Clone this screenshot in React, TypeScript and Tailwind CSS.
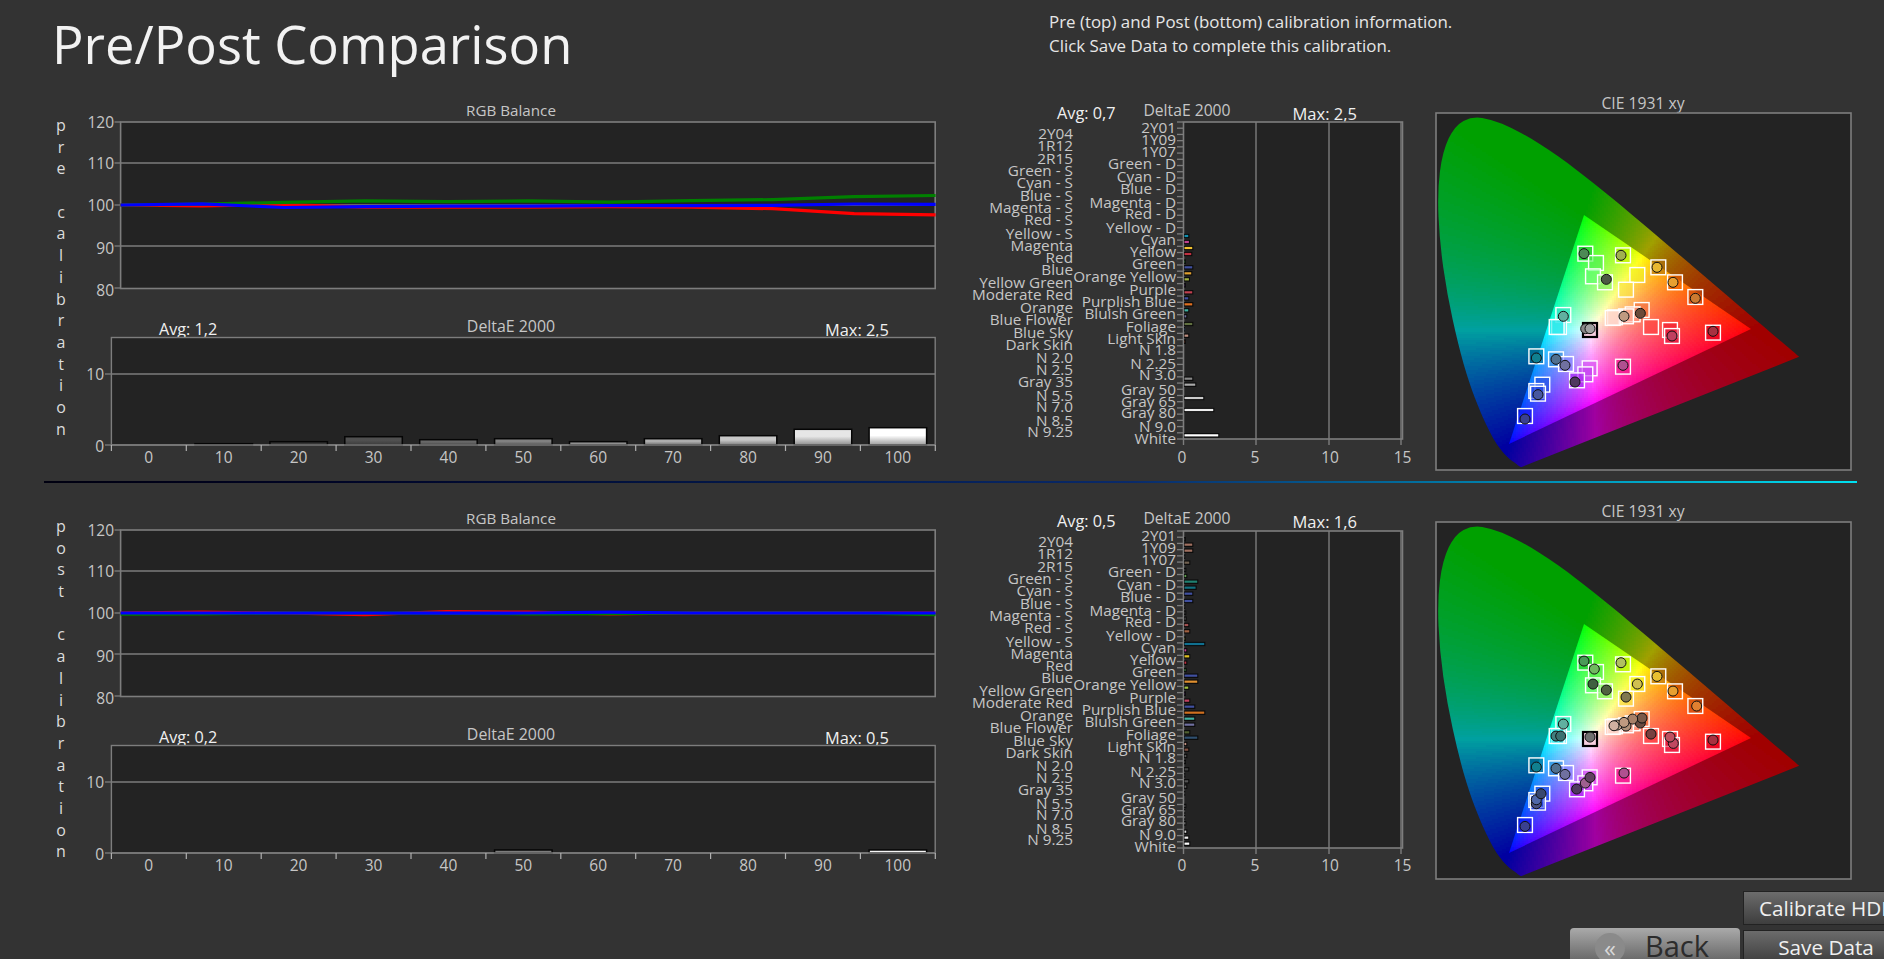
import React from "react";

const LABEL = "#c6c6c6";
const FRAME = "#7d7d7d";

type Side = "pre" | "post";

const XYZ_LOCUS: [number, number][] = [
  [0.1741, 0.005], [0.174, 0.005], [0.1738, 0.0049], [0.1736, 0.0049], [0.1733, 0.0048], [0.173, 0.0048],
  [0.1726, 0.0048], [0.1721, 0.0048], [0.1714, 0.0051], [0.1703, 0.0058], [0.1689, 0.0069], [0.1669, 0.0086],
  [0.1644, 0.0109], [0.1611, 0.0138], [0.1566, 0.0177], [0.151, 0.0227], [0.144, 0.0297], [0.1355, 0.0399],
  [0.1241, 0.0578], [0.1096, 0.0868], [0.0913, 0.1327], [0.0687, 0.2007], [0.0454, 0.295], [0.0235, 0.4127],
  [0.0082, 0.5384], [0.0039, 0.6548], [0.0139, 0.7502], [0.0389, 0.812], [0.0743, 0.8338], [0.1142, 0.8262],
  [0.1547, 0.8059], [0.1929, 0.7816], [0.2296, 0.7543], [0.2658, 0.7243], [0.3016, 0.6923], [0.3373, 0.6589],
  [0.3731, 0.6245], [0.4087, 0.5896], [0.4441, 0.5547], [0.4788, 0.5202], [0.5125, 0.4866], [0.5448, 0.4544],
  [0.5752, 0.4242], [0.6029, 0.3965], [0.627, 0.3725], [0.6482, 0.3514], [0.6658, 0.334], [0.6915, 0.3083],
  [0.7079, 0.292], [0.719, 0.2809], [0.726, 0.274], [0.7334, 0.2666], [0.7347, 0.2653],
];

const px = (x: number) => 1435.5 + 495 * x;
const py = (y: number) => 469 - 423 * y;
const invX = (p: number) => (p - 1435.5) / 495;
const invY = (p: number) => (469 - p) / 423;

const locusPath = (() => {
  const pts = XYZ_LOCUS.map(([x, y]) => [px(x), py(y)] as [number, number]);
  let d = `M${pts[0][0].toFixed(1)} ${pts[0][1].toFixed(1)}`;
  for (let i = 1; i < pts.length - 1; i++) {
    const mx = (pts[i][0] + pts[i + 1][0]) / 2;
    const my = (pts[i][1] + pts[i + 1][1]) / 2;
    d += `Q${pts[i][0].toFixed(1)} ${pts[i][1].toFixed(1)} ${mx.toFixed(1)} ${my.toFixed(1)}`;
  }
  const last = pts[pts.length - 1];
  return `${d}L${last[0].toFixed(1)} ${last[1].toFixed(1)}Z`;
})();
const trianglePoints = "1751,329 1584,215 1509,444";

function chroma(x: number, y: number, k: number, gamma: number): string {
  const X = x / y;
  const Z = (1 - x - y) / y;
  const r = Math.max(0, 3.2406 * X - 1.5372 - 0.4986 * Z);
  const g = Math.max(0, -0.9689 * X + 1.8758 + 0.0415 * Z);
  const b = Math.max(0, 0.0557 * X - 0.204 + 1.057 * Z);
  const m = Math.max(r, g, b, 1e-6);
  const ch = (v: number) => {
    const c = Math.pow(v / m, 1 / gamma) * 255 * k;
    return Math.min(255, Math.round(c / 5) * 5);
  };
  return `rgb(${ch(r)},${ch(g)},${ch(b)})`;
}

function buildCells(x0: number, x1: number, y0: number, y1: number, k: number, gamma: number) {
  const map = new Map<string, string[]>();
  for (let y = y0; y < y1; y += 2) {
    let start = x0;
    let last = "";
    for (let x = x0; x <= x1; x += 2) {
      const c = x < x1 ? chroma(invX(x + 1), Math.max(0.002, invY(y + 1)), k, gamma) : "";
      if (c !== last) {
        if (last) {
          const w = x - start;
          if (!map.has(last)) map.set(last, []);
          map.get(last)!.push(`M${start} ${y}h${w}v2.2h-${w}z`);
        }
        start = x;
        last = c;
      }
    }
  }
  return Array.from(map.entries()).map(([c, parts]) => ({ c, d: parts.join("") }));
}

const outerCells = buildCells(1436, 1802, 114, 472, 0.63, 1.1);
const innerCells = buildCells(1506, 1754, 212, 446, 1, 1.35);

const squares: [number, number, string][] = [
  [496, 491, "#22c030"], [528, 519, "#50f050"], [519, 559, "#60ff70"], [555, 577, "#80f060"],
  [609, 496, "#b8f000"], [652, 555, "#f0f020"], [618, 599, "#f8e040"], [715, 532, "#b07010"],
  [765, 577, "#f06000"], [826, 621, "#c85010"], [665, 660, "#f07040"], [638, 673, "#ff9a80"],
  [618, 679, "#ffb0a0"], [585, 682, "#ffe0d0"], [578, 684, "#ffd8d0"], [693, 711, "#ff4040"],
  [750, 720, "#f01830"], [756, 738, "#e01840"], [879, 728, "#e00020"], [430, 675, "#30e0c0"],
  [417, 711, "#30e8f0"], [410, 711, "#30e8e8"], [349, 799, "#006888"], [408, 808, "#3090d8"],
  [438, 822, "#8080ff"], [509, 835, "#d050f0"], [496, 853, "#c040f0"], [471, 871, "#a020f0"],
  [609, 830, "#f01888"], [367, 884, "#2050e0"], [349, 903, "#3060f0"], [354, 911, "#2040e0"],
  [315, 978, "#1010f0"],
];

const preDots: [number, number, string][] = [
  [492, 491, "#4d8a55"], [559, 568, "#4d5a45"], [603, 496, "#a0b050"], [711, 532, "#e8b830"],
  [759, 577, "#e8a030"], [826, 625, "#cc7a30"], [661, 670, "#6a4a3a"], [612, 679, "#c09a80"],
  [756, 738, "#c04060"], [879, 724, "#a83040"], [430, 679, "#60b0a0"], [497, 716, "#888888"],
  [510, 716, "#a0a0a0"], [349, 804, "#108090"], [408, 808, "#507090"], [435, 826, "#7070a0"],
  [465, 876, "#503860"], [609, 826, "#b05090"], [354, 914, "#4858a0"], [315, 987, "#3a4090"],
];

const postDots: [number, number, string][] = [
  [492, 491, "#4a9a58"], [523, 515, "#70b860"], [519, 560, "#3f6040"], [559, 578, "#506040"],
  [603, 496, "#b0c060"], [652, 560, "#d0c050"], [618, 599, "#807850"], [711, 537, "#e8c030"],
  [759, 581, "#e8a030"], [830, 626, "#e08030"], [661, 677, "#6a4a40"], [666, 662, "#7a5a4a"],
  [618, 686, "#b09078"], [638, 665, "#a88068"], [592, 683, "#c8a890"], [612, 675, "#c09a80"],
  [582, 685, "#d0b0a0"], [693, 710, "#784040"], [760, 738, "#c04860"], [750, 719, "#c05060"],
  [879, 728, "#a83040"], [430, 680, "#60b0a0"], [408, 716, "#408080"], [422, 716, "#3a7070"],
  [510, 719, "#707070"], [349, 809, "#108090"], [408, 813, "#507090"], [435, 831, "#7070a0"],
  [470, 875, "#503860"], [496, 857, "#a06090"], [510, 840, "#604060"], [612, 827, "#b05090"],
  [349, 919, "#485080"], [349, 907, "#5068a8"], [363, 889, "#384870"], [315, 987, "#3a4090"],
];

function CiePlot({ side, dots }: { side: Side; dots: [number, number, string][] }) {
  const dy = side === "post" ? 1 : 0;
  const zx = (v: number) => v / 3 + 1420;
  const zy = (v: number) => v / 3 + 90;
  return (
    <svg className="block w-[464px] h-[385px] shrink-0" viewBox="1420 96 464 385">
      <text x={1643} y={102.5 + dy / 2} textAnchor="middle" dominantBaseline="central" fill={LABEL} fontSize={15.7}>
        CIE 1931 xy
      </text>
      <g transform={`translate(0 ${dy})`}>
        <rect x={1436} y={113} width={415} height={357} fill="#232323" stroke={FRAME} strokeWidth={1.6} />
        {side === "pre" ? (
          <defs>
            <clipPath id="locus-clip">
              <path d={locusPath} />
            </clipPath>
            <clipPath id="gamut-clip">
              <polygon points={trianglePoints} />
            </clipPath>
            <g id="cie-field">
              <g clipPath="url(#locus-clip)" shapeRendering="crispEdges">
                {outerCells.map((c) => (
                  <path key={c.c} d={c.d} fill={c.c} />
                ))}
              </g>
              <g clipPath="url(#gamut-clip)" shapeRendering="crispEdges">
                {innerCells.map((c) => (
                  <path key={c.c} d={c.d} fill={c.c} />
                ))}
              </g>
            </g>
          </defs>
        ) : null}
        <use href="#cie-field" />
        {squares.map(([x, y, fill], i) => (
          <rect
            key={i}
            x={zx(x) - 7.4}
            y={zy(y) - 7.4}
            width={14.8}
            height={14.8}
            fill={fill}
            fillOpacity={0.6}
            stroke="#ffffff"
            strokeWidth={1.4}
          />
        ))}
        <rect x={zx(510) - 7} y={zy(720) - 7} width={14} height={14} fill="#f8d0e0" stroke="#000" strokeWidth={2.2} />
        {dots.map(([x, y, fill], i) => (
          <circle key={i} cx={zx(x)} cy={zy(y) - (side === "post" ? 1.6 : 0)} r={5} fill={fill} stroke="#111" strokeWidth={1} />
        ))}
      </g>
    </svg>
  );
}

const preRows: [number, number, string][] = [
  [438, 718, "#1090b0"], [456, 720, "#c04090"], [474, 730, "#f0c030"], [492, 727, "#c03040"], [515, 708, "#408040"],
  [532, 730, "#4050a0"], [550, 727, "#e0a030"], [568, 720, "#a0b040"], [586, 708, "#503060"], [607, 730, "#c04050"],
  [625, 718, "#4050a0"], [643, 730, "#e07020"], [661, 718, "#40b0a0"], [679, 712, "#7070a0"], [702, 730, "#607040"],
  [718, 705, "#305070"], [737, 718, "#c09080"], [755, 708, "#704030"], [866, 730, "#888888"], [884, 739, "#aaaaaa"],
  [924, 763, "#cccccc"], [960, 793, "#eeeeee"], [1036, 808, "#ffffff"],
];

const postRows: [number, number, string][] = [
  [118, 708, "#444444"], [134, 730, "#a07060"], [152, 730, "#a07060"], [170, 706, "#444444"], [188, 721, "#706050"],
  [210, 709, "#555555"], [228, 712, "#60a050"], [245, 745, "#208070"], [263, 740, "#107080"], [281, 730, "#4050a0"],
  [303, 730, "#4050a0"], [320, 706, "#444444"], [338, 709, "#555555"], [356, 710, "#555555"], [375, 718, "#a05050"],
  [394, 721, "#a06040"], [416, 708, "#808040"], [432, 766, "#107090"], [451, 712, "#c04090"], [469, 721, "#e0c020"],
  [488, 712, "#c03040"], [510, 710, "#408040"], [527, 745, "#4050a0"], [545, 745, "#e09030"], [563, 718, "#a0c040"],
  [581, 708, "#503060"], [602, 721, "#c04060"], [620, 736, "#4050a0"], [638, 766, "#d07020"], [656, 736, "#40b0a0"],
  [674, 736, "#7070a0"], [697, 721, "#506030"], [713, 745, "#305070"], [732, 712, "#c09080"], [749, 718, "#805040"],
  [768, 712, "#555555"], [786, 708, "#555555"], [808, 718, "#444444"], [826, 706, "#444444"], [844, 718, "#555555"],
  [860, 712, "#666666"], [880, 706, "#666666"], [918, 709, "#777777"], [934, 706, "#888888"], [952, 706, "#aaaaaa"],
  [970, 709, "#bbbbbb"], [995, 712, "#dddddd"], [1013, 718, "#eeeeee"], [1031, 721, "#ffffff"],
];

const rightLabels: [string, number][] = [
  ["2Y01", 110], ["1Y09", 147], ["1Y07", 183], ["Green - D", 220], ["Cyan - D", 257], ["Blue - D", 293],
  ["Magenta - D", 335], ["Red - D", 368], ["Yellow - D", 410], ["Cyan", 446], ["Yellow", 482], ["Green", 520],
  ["Orange Yellow", 557], ["Purple", 596], ["Purplish Blue", 632], ["Bluish Green", 668], ["Foliage", 707],
  ["Light Skin", 743], ["N 1.8", 778], ["N 2.25", 818], ["N 3.0", 853], ["Gray 50", 896], ["Gray 65", 932],
  ["Gray 80", 965], ["N 9.0", 1007], ["White", 1043],
];

const leftLabels: [string, number][] = [
  ["2Y04", 128], ["1R12", 165], ["2R15", 203], ["Green - S", 239], ["Cyan - S", 275], ["Blue - S", 316],
  ["Magenta - S", 350], ["Red - S", 386], ["Yellow - S", 428], ["Magenta", 464], ["Red", 502], ["Blue", 538],
  ["Yellow Green", 575], ["Moderate Red", 613], ["Orange", 650], ["Blue Flower", 686], ["Blue Sky", 725],
  ["Dark Skin", 761], ["N 2.0", 800], ["N 2.5", 836], ["Gray 35", 872], ["N 5.5", 914], ["N 7.0", 947],
  ["N 8.5", 989], ["N 9.25", 1024],
];

function PatchChart({ side, avg, max, rows }: { side: Side; avg: string; max: string; rows: [number, number, string][] }) {
  const dy = side === "post" ? 1 : 0;
  const base = side === "post" ? 92 : 90;
  const lift = side === "post" ? 0 : 0;
  const z = (v: number) => v / 3 + 90;
  const ticks = Array.from({ length: 52 }, (_, i) => 122 + (i * 317) / 51);
  return (
    <svg className="block w-[480px] h-[385px] shrink-0" viewBox="940 96 480 385">
      <text x={1057} y={113} dominantBaseline="central" fill="#f0f0f0" fontSize={16.3}>
        Avg: {avg}
      </text>
      <text x={1187} y={109.5} textAnchor="middle" dominantBaseline="central" fill={LABEL} fontSize={15.7}>
        DeltaE 2000
      </text>
      <text x={1292.5} y={113} dominantBaseline="central" fill="#f0f0f0" fontSize={16.5}>
        Max: {max}
      </text>
      <g transform={`translate(0 ${dy})`}>
        <rect x={1183.5} y={122} width={219} height={317} fill="#232323" stroke={FRAME} strokeWidth={1.6} />
        <line x1={1256} x2={1256} y1={122} y2={445} stroke={FRAME} strokeWidth={1.4} />
        <line x1={1329} x2={1329} y1={122} y2={445} stroke={FRAME} strokeWidth={1.4} />
        <line x1={1183.5} x2={1183.5} y1={439} y2={445} stroke={FRAME} strokeWidth={1.4} />
        <line x1={1401} x2={1401} y1={122} y2={445} stroke={FRAME} strokeWidth={1.4} />
        {ticks.map((t) => (
          <line key={t} x1={1177} x2={1183} y1={t} y2={t} stroke={FRAME} strokeWidth={1.3} />
        ))}
      </g>
      {rows.map(([y, end, c], i) => {
        const yy = base + y / 3;
        const w = end / 3 + 950 - 1184;
        return (
          <g key={i}>
            <rect x={1184} y={yy - 2.2} width={w} height={4.4} fill="#0a0a0a" />
            <rect x={1184.5} y={yy - 1.1} width={Math.max(0.6, w - 1.6)} height={2.2} fill={c} />
          </g>
        );
      })}
      {rightLabels.map(([t, y]) => (
        <text key={t} x={1176} y={z(y) + lift} textAnchor="end" dominantBaseline="central" fill={LABEL} fontSize={15.3}>
          {t}
        </text>
      ))}
      {leftLabels.map(([t, y]) => (
        <text key={t} x={1073} y={z(y) + lift} textAnchor="end" dominantBaseline="central" fill={LABEL} fontSize={15.3}>
          {t}
        </text>
      ))}
      {[["0", 1182], ["5", 1255], ["10", 1330], ["15", 1402.5]].map(([t, x]) => (
        <text key={t} x={x} y={457} textAnchor="middle" dominantBaseline="central" fill={LABEL} fontSize={15.5}>
          {t}
        </text>
      ))}
    </svg>
  );
}

const RGB_X = (i: number) => 120.6 + i * 81.5;
const RGB_Y = (v: number) => 205 - (v - 100) * 4.13;

function poly(values: number[]) {
  return values.map((v, i) => `${RGB_X(i).toFixed(1)},${RGB_Y(v).toFixed(1)}`).join(" ");
}

type Balance = { red: number[]; green: number[]; blue: number[] };

const preBalance: Balance = {
  green: [100, 100.2, 100.65, 101, 100.8, 101, 100.7, 101.05, 101.3, 102, 102.3],
  red: [100, 99.8, 100.1, 99.5, 99.5, 99.5, 99.6, 99.5, 99.1, 97.9, 97.6],
  blue: [100, 100.3, 99.4, 99.6, 99.7, 99.7, 99.85, 99.85, 99.9, 100.25, 100.15],
};

const postBalance: Balance = {
  green: [99.7, 99.8, 100, 100, 99.9, 99.8, 99.85, 100, 100, 100, 99.6],
  red: [100, 100.2, 100, 99.6, 100.35, 100.2, 99.8, 100, 100, 100, 100],
  blue: [100, 100, 100, 100, 99.95, 100, 100.2, 100, 100, 100, 100],
};

function LeftCharts({ avg, max, balance, heights }: { avg: string; max: string; balance: Balance; heights: number[] }) {
  const shades = ["#101010", "#202020", "#383838", "#505050", "#686868", "#808080", "#989898", "#aeaeae", "#c8c8c8", "#e6e6e6", "#ffffff"];
  const band = 74.9;
  return (
    <svg className="block w-[870px] h-[385px] shrink-0" viewBox="70 96 870 385">
      <defs>
        {shades.map((c, i) => (
          <linearGradient key={c} id={`bar-${avg}-${i}`} x1="0" x2="0" y1="0" y2="1">
            <stop offset="0.45" stopColor={c} />
            <stop offset="1" stopColor={c} stopOpacity={0.55} />
          </linearGradient>
        ))}
      </defs>
      <text x={511} y={110} textAnchor="middle" dominantBaseline="central" fill={LABEL} fontSize={15.2}>
        RGB Balance
      </text>
      <rect x={120.6} y={122} width={814.6} height={166.5} fill="#232323" stroke={FRAME} strokeWidth={1.6} />
      {[163, 205, 246].map((y) => (
        <line key={y} x1={120.6} x2={935} y1={y} y2={y} stroke={FRAME} strokeWidth={1.3} />
      ))}
      {[
        ["120", 121.5],
        ["110", 163],
        ["100", 204.5],
        ["90", 248],
        ["80", 289.5],
      ].map(([t, y]) => (
        <text key={t} x={114} y={y} textAnchor="end" dominantBaseline="central" fill={LABEL} fontSize={15.5}>
          {t}
        </text>
      ))}
      {[122, 163, 205, 246, 288].map((y) => (
        <line key={y} x1={114.5} x2={120.6} y1={y} y2={y} stroke={FRAME} strokeWidth={1.3} />
      ))}
      <polyline points={poly(balance.red)} fill="none" stroke="#ff0000" strokeWidth={3.2} strokeLinejoin="round" />
      <polyline points={poly(balance.green)} fill="none" stroke="#008000" strokeWidth={3.2} strokeLinejoin="round" />
      <polyline points={poly(balance.blue)} fill="none" stroke="#0000ff" strokeWidth={3.2} strokeLinejoin="round" />

      <text x={159} y={329} dominantBaseline="central" fill="#f0f0f0" fontSize={16.2}>
        Avg: {avg}
      </text>
      <text x={511} y={326} textAnchor="middle" dominantBaseline="central" fill={LABEL} fontSize={15.9}>
        DeltaE 2000
      </text>
      <text x={825} y={329} dominantBaseline="central" fill="#f0f0f0" fontSize={16.4}>
        Max: {max}
      </text>
      <rect x={111.4} y={337.5} width={823.8} height={107.5} fill="#232323" stroke={FRAME} strokeWidth={1.4} />
      <line x1={111.4} x2={935} y1={374} y2={374} stroke={FRAME} strokeWidth={1.3} />
      {[
        ["10", 374],
        ["0", 446],
      ].map(([t, y]) => (
        <text key={t} x={104} y={y} textAnchor="end" dominantBaseline="central" fill={LABEL} fontSize={15.5}>
          {t}
        </text>
      ))}
      {[374, 445].map((y) => (
        <line key={y} x1={105} x2={111.4} y1={y} y2={y} stroke={FRAME} strokeWidth={1.3} />
      ))}
      {heights.map((h, i) =>
        h > 0 ? (
          <rect
            key={i}
            x={111.4 + band * i + 8.7}
            y={445 - h}
            width={57.5}
            height={h}
            fill={`url(#bar-${avg}-${i})`}
            stroke="#050505"
            strokeWidth={1.5}
          />
        ) : null,
      )}
      <line x1={111.4} x2={935} y1={445} y2={445} stroke={FRAME} strokeWidth={1.6} />
      {Array.from({ length: 12 }, (_, i) => (
        <line key={i} x1={111.4 + band * i} x2={111.4 + band * i} y1={445} y2={451} stroke="#b0b0b0" strokeWidth={1.2} />
      ))}
      {["0", "10", "20", "30", "40", "50", "60", "70", "80", "90", "100"].map((t, i) => (
        <text key={t} x={148.8 + band * i} y={457} textAnchor="middle" dominantBaseline="central" fill={LABEL} fontSize={15.5}>
          {t}
        </text>
      ))}
    </svg>
  );
}

function VerticalLabel({ word, top }: { word: string; top: string }) {
  return (
    <div className={`w-[18px] shrink-0 flex flex-col items-center text-[16px] text-[#dcdcdc] ${top}`}>
      {word.split("").map((ch, i) => (
        <span key={i} className="block h-[21.7px] leading-[21.7px]">
          {ch === " " ? "\u00a0" : ch}
        </span>
      ))}
    </div>
  );
}

function Section({ side }: { side: Side }) {
  const pre = side === "pre";
  return (
    <section className="flex h-[385px] pl-[52px]">
      <VerticalLabel word={pre ? "pre calibration" : "post calibration"} top={pre ? "pt-[19px]" : "pt-[12px]"} />
      <LeftCharts
        avg={pre ? "1,2" : "0,2"}
        max={pre ? "2,5" : "0,5"}
        balance={pre ? preBalance : postBalance}
        heights={pre ? [0, 1.3, 3.3, 8.3, 5.3, 6.3, 3.3, 6.3, 9.3, 15.7, 17.3] : [0, 0, 0, 0, 0, 3, 0, 0, 0, 0, 3]}
      />
      <PatchChart side={side} avg={pre ? "0,7" : "0,5"} max={pre ? "2,5" : "1,6"} rows={pre ? preRows : postRows} />
      <CiePlot side={side} dots={pre ? preDots : postDots} />
    </section>
  );
}

export default function App() {
  return (
    <div className="w-[1884px] h-[959px] overflow-hidden bg-[#333333] font-['Open_Sans',sans-serif]">
      <header className="flex h-[96px]">
        <h1 className="w-[1049px] shrink-0 pl-[52px] pt-[7px] text-[52.5px] leading-[74px] font-normal text-[#f2f2f2]">
          Pre/Post Comparison
        </h1>
        <p className="pt-[10px] text-[16.9px] leading-[24px] text-[#e6e6e6]">
          Pre (top) and Post (bottom) calibration information.
          <br />
          Click Save Data to complete this calibration.
        </p>
      </header>
      <Section side="pre" />
      <div className="ml-[44px] w-[1813px] h-[2px] bg-linear-to-r from-[#000010] via-[#0a2a6a] via-60% to-[#00e0f0]" />
      <div className="h-[21px]" />
      <Section side="post" />
      <footer className="flex pl-[1570px] pt-[2px] gap-[3px]">
        <button className="mt-[37px] flex w-[170px] h-[34px] shrink-0 items-start gap-[20px] rounded-t-[4px] pl-[25px] bg-linear-to-b from-[#aaaaaa] to-[#666666] text-[#2c2c2c] text-[29px] leading-[36px]">
          <span className="mt-[5px] flex size-[30px] items-center justify-center rounded-full bg-[#8a8a8a] text-[24px] leading-[24px] text-[#d8d8d8]">
            «
          </span>
          <span>Back</span>
        </button>
        <div className="flex w-[166px] shrink-0 flex-col gap-[5px]">
          <button className="h-[34px] whitespace-nowrap bg-linear-to-b from-[#6c6c6c] to-[#3e3e3e] pl-[15px] text-left text-[20.7px] leading-[32px] text-[#f0f0f0] border border-[#222222]">
            Calibrate HDR
          </button>
          <button className="h-[34px] whitespace-nowrap bg-linear-to-b from-[#6c6c6c] to-[#3e3e3e] text-[20.7px] leading-[32px] text-[#f0f0f0] border border-[#222222]">
            Save Data
          </button>
        </div>
      </footer>
    </div>
  );
}
